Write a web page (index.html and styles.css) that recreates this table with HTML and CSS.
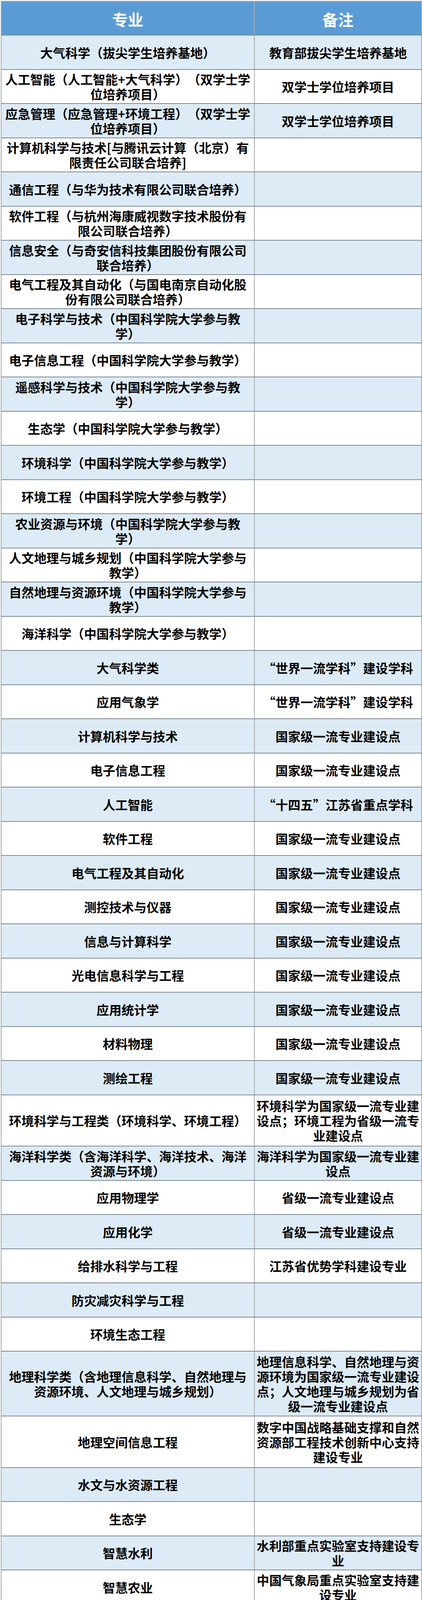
FILE: index.html
```html
<!DOCTYPE html>
<html lang="zh-CN">
<head>
<meta charset="utf-8">
<title>专业列表</title>
<link rel="stylesheet" href="styles.css">
</head>
<body>
<table class="sheet">
  <colgroup><col class="c-major"><col class="c-note"></colgroup>
  <thead>
    <tr><th>专业</th><th>备注</th></tr>
  </thead>
  <tbody>
    <tr><td>大气科学（拔尖学生培养基地）</td><td class="note">教育部拔尖学生培养基地</td></tr>
    <tr><td>人工智能（人工智能+大气科学）（双学士学位培养项目）</td><td class="note">双学士学位培养项目</td></tr>
    <tr><td>应急管理（应急管理+环境工程）（双学士学位培养项目）</td><td class="note">双学士学位培养项目</td></tr>
    <tr><td>计算机科学与技术[与腾讯云计算（北京）有限责任公司联合培养]</td><td class="note"></td></tr>
    <tr><td>通信工程（与华为技术有限公司联合培养）</td><td class="note"></td></tr>
    <tr><td>软件工程（与杭州海康威视数字技术股份有限公司联合培养）</td><td class="note"></td></tr>
    <tr><td>信息安全（与奇安信科技集团股份有限公司联合培养）</td><td class="note"></td></tr>
    <tr><td>电气工程及其自动化（与国电南京自动化股份有限公司联合培养）</td><td class="note"></td></tr>
    <tr><td>电子科学与技术（中国科学院大学参与教学）</td><td class="note"></td></tr>
    <tr><td>电子信息工程（中国科学院大学参与教学）</td><td class="note"></td></tr>
    <tr><td>遥感科学与技术（中国科学院大学参与教学）</td><td class="note"></td></tr>
    <tr><td>生态学（中国科学院大学参与教学）</td><td class="note"></td></tr>
    <tr><td>环境科学（中国科学院大学参与教学）</td><td class="note"></td></tr>
    <tr><td>环境工程（中国科学院大学参与教学）</td><td class="note"></td></tr>
    <tr><td>农业资源与环境（中国科学院大学参与教学）</td><td class="note"></td></tr>
    <tr><td>人文地理与城乡规划（中国科学院大学参与教学）</td><td class="note"></td></tr>
    <tr><td>自然地理与资源环境（中国科学院大学参与教学）</td><td class="note"></td></tr>
    <tr><td>海洋科学（中国科学院大学参与教学）</td><td class="note"></td></tr>
    <tr><td>大气科学类</td><td class="note">“世界一流学科”建设学科</td></tr>
    <tr><td>应用气象学</td><td class="note">“世界一流学科”建设学科</td></tr>
    <tr><td>计算机科学与技术</td><td class="note">国家级一流专业建设点</td></tr>
    <tr><td>电子信息工程</td><td class="note">国家级一流专业建设点</td></tr>
    <tr><td>人工智能</td><td class="note">“十四五”江苏省重点学科</td></tr>
    <tr><td>软件工程</td><td class="note">国家级一流专业建设点</td></tr>
    <tr><td>电气工程及其自动化</td><td class="note">国家级一流专业建设点</td></tr>
    <tr><td>测控技术与仪器</td><td class="note">国家级一流专业建设点</td></tr>
    <tr><td>信息与计算科学</td><td class="note">国家级一流专业建设点</td></tr>
    <tr><td>光电信息科学与工程</td><td class="note">国家级一流专业建设点</td></tr>
    <tr><td>应用统计学</td><td class="note">国家级一流专业建设点</td></tr>
    <tr><td>材料物理</td><td class="note">国家级一流专业建设点</td></tr>
    <tr><td>测绘工程</td><td class="note">国家级一流专业建设点</td></tr>
    <tr class="h3"><td>环境科学与工程类（环境科学、环境工程）</td><td class="note">环境科学为国家级一流专业建设点；环境工程为省级一流专业建设点</td></tr>
    <tr><td>海洋科学类（含海洋科学、海洋技术、海洋资源与环境）</td><td class="note">海洋科学为国家级一流专业建设点</td></tr>
    <tr><td>应用物理学</td><td class="note">省级一流专业建设点</td></tr>
    <tr><td>应用化学</td><td class="note">省级一流专业建设点</td></tr>
    <tr><td>给排水科学与工程</td><td class="note">江苏省优势学科建设专业</td></tr>
    <tr><td>防灾减灾科学与工程</td><td class="note"></td></tr>
    <tr><td>环境生态工程</td><td class="note"></td></tr>
    <tr class="h4"><td>地理科学类（含地理信息科学、自然地理与资源环境、人文地理与城乡规划）</td><td class="note">地理信息科学、自然地理与资源环境为国家级一流专业建设点；人文地理与城乡规划为省级一流专业建设点</td></tr>
    <tr class="h3"><td>地理空间信息工程</td><td class="note">数字中国战略基础支撑和自然资源部工程技术创新中心支持建设专业</td></tr>
    <tr><td>水文与水资源工程</td><td class="note"></td></tr>
    <tr><td>生态学</td><td class="note"></td></tr>
    <tr><td>智慧水利</td><td class="note">水利部重点实验室支持建设专业</td></tr>
    <tr><td>智慧农业</td><td class="note">中国气象局重点实验室支持建设专业</td></tr>
    <tr><td>数学与应用数学（师范）</td><td class="note">师范类</td></tr>
    <tr><td>物理学（师范）</td><td class="note">师范类</td></tr>
    <tr class="end"><td>地理科学（师范）</td><td class="note">师范类</td></tr>
  </tbody>
</table>
</body>
</html>
```

FILE: styles.css
```css
html, body {
  margin: 0;
  padding: 0;
  background: #ffffff;
}

.sheet {
  width: 1076px;
  margin: 2px 2px 0 2px;
  border-collapse: collapse;
  table-layout: fixed;
  font-family: "Noto Sans CJK SC", "Noto Sans", sans-serif;
  font-weight: 700;
  color: #000000;
  text-align: center;
  text-spacing-trim: space-all;
}

.c-major { width: 648px; }
.c-note { width: 428px; }

.sheet th {
  background: #5b9bd5;
  color: #ffffff;
  font-size: 40px;
  line-height: 48px;
  height: 81px;
  padding: 4px 0 0;
  border-top: 2px solid #a9b3bd;
  border-bottom: 2px solid #7e8994;
  border-left: 2px solid #a6abb0;
  border-right: 2px solid #a6abb0;
  vertical-align: middle;
}

.sheet td {
  font-size: 32px;
  line-height: 38px;
  height: 85.5px;
  padding: 0 6px;
  border-top: 2px solid #7e8994;
  border-bottom: 2px solid #7e8994;
  border-left: 2px solid #a6abb0;
  border-right: 2px solid #a6abb0;
  vertical-align: middle;
  background: #ffffff;
}

.sheet td.note {
  padding: 0 3px;
}

.sheet tbody tr:nth-child(odd) td {
  background: #ddebf7;
}

.sheet tr.h3 td { height: 129.5px; }
.sheet tr.h4 td { height: 164px; }
.sheet tr.end td { height: 73px; }
```
